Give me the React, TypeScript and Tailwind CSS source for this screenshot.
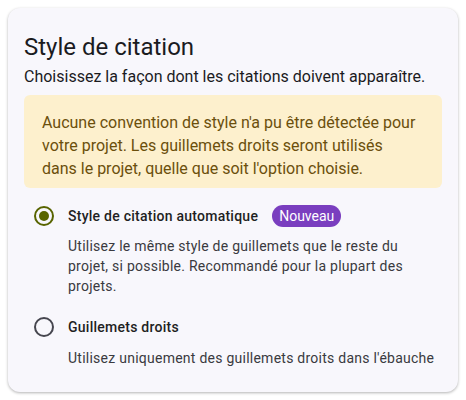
import React from "react";

type Option = {
  id: string;
  label: string;
  badge?: string;
  description: string;
};

const options: Option[] = [
  {
    id: "auto",
    label: "Style de citation automatique",
    badge: "Nouveau",
    description:
      "Utilisez le même style de guillemets que le reste du projet, si possible. Recommandé pour la plupart des projets.",
  },
  {
    id: "straight",
    label: "Guillemets droits",
    description: "Utilisez uniquement des guillemets droits dans l'ébauche",
  },
];

function Radio({ checked }: { checked: boolean }) {
  return (
    <span
      className={
        checked
          ? "flex h-5 w-5 shrink-0 items-center justify-center rounded-full border-2 border-[#586400]"
          : "flex h-5 w-5 shrink-0 items-center justify-center rounded-full border-2 border-[#46464f]"
      }
    >
      {checked && <span className="h-[10px] w-[10px] rounded-full bg-[#586400]" />}
    </span>
  );
}

export default function App() {
  const selected = "auto";

  return (
    <div className="bg-white p-2 font-['Roboto','Noto_Sans',sans-serif]">
      <div className="rounded-xl bg-[#f8f7fc] px-4 pb-6 pt-[23px] shadow-[0_1px_3px_rgba(0,0,0,0.3)]">
        <h1 className="text-[24px] leading-[32px] text-[#1b1b1f]">Style de citation</h1>
        <p className="mt-[2px] text-[16px] leading-[24px] text-[#1b1b1f]">
          Choisissez la façon dont les citations doivent apparaître.
        </p>
        <div className="mt-[6px] rounded-md bg-[#fdf0cd] pb-2 pl-[18px] pr-6 pt-4 text-[16px] leading-[23px] text-[#6b4f0c]">
          Aucune convention de style n'a pu être détectée pour votre projet. Les guillemets droits seront
          utilisés dans le projet, quelle que soit l'option choisie.
        </div>

        <div className="mt-[17px] flex flex-col">
          {options.map((o, i) => (
            <div key={o.id} className={i > 0 ? "mt-[21px]" : ""}>
              <div className="flex items-center">
                <span className="ml-[10px]">
                  <Radio checked={o.id === selected} />
                </span>
                <span className="ml-[14px] text-[14px] font-medium leading-[20px] tracking-[0.25px] text-[#1f1f23]">
                  {o.label}
                </span>
                {o.badge && (
                  <span className="ml-[14px] rounded-full bg-[#7a3ebf] px-[7px] text-[14px] leading-[22px] text-white">
                    {o.badge}
                  </span>
                )}
              </div>
              <p
                className={
                  o.badge
                    ? "ml-[44px] mt-[9px] text-[14px] leading-[20px] tracking-[0.25px] text-[#3a3a40]"
                    : "ml-[44px] mt-[11px] text-[14px] leading-[20px] tracking-[0.25px] text-[#3a3a40]"
                }
              >
                {o.description}
              </p>
            </div>
          ))}
        </div>
      </div>
    </div>
  );
}
